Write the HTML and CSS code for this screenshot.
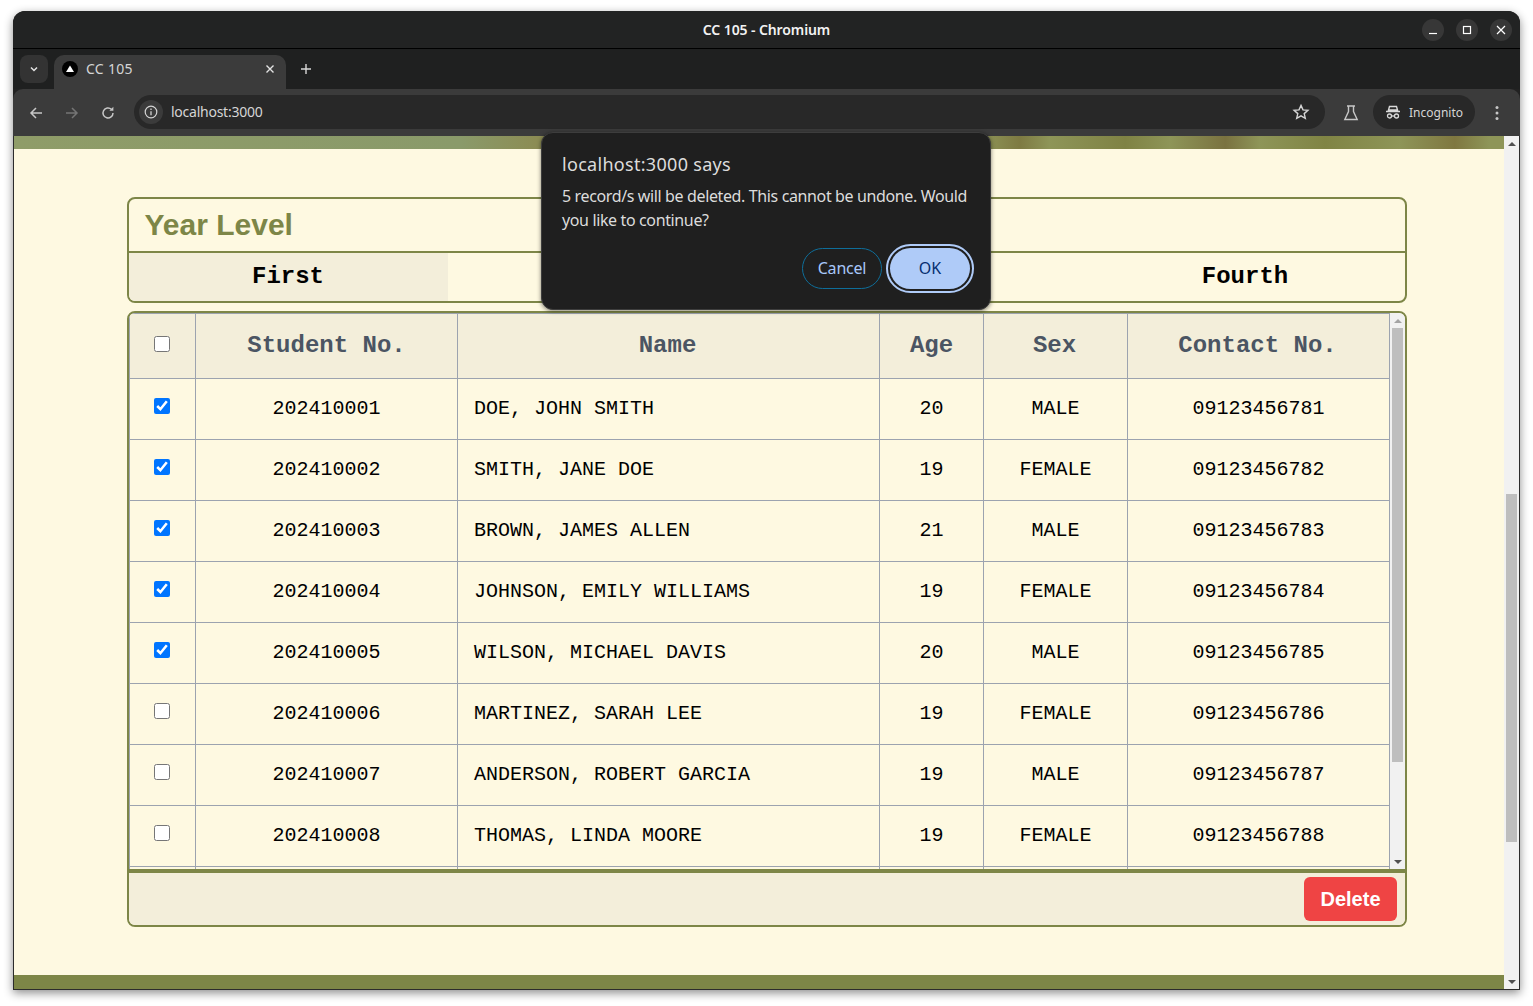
FILE: index.html
```html
<!DOCTYPE html>
<html lang="en">
<head>
    <meta charset="UTF-8">
    <title>CC 105</title>
    <link rel="stylesheet" href="styles.css">
</head>
<body>
<div class="window">
    <div class="titlebar">
        <span class="title-text">CC 105 - Chromium</span>
        <div class="win-btns">
            <span class="win-btn"><svg width="10" height="10" viewBox="0 0 10 10"><path d="M1 8.5h8" stroke="#fff" stroke-width="1.2"/></svg></span>
            <span class="win-btn"><svg width="10" height="10" viewBox="0 0 10 10"><rect x="1.5" y="1.5" width="7" height="7" fill="none" stroke="#fff" stroke-width="1.2"/></svg></span>
            <span class="win-btn"><svg width="10" height="10" viewBox="0 0 10 10"><path d="M1 1l8 8M9 1l-8 8" stroke="#fff" stroke-width="1.2"/></svg></span>
        </div>
    </div>

    <div class="tabstrip">
        <span class="tab-search"><svg width="10" height="10" viewBox="0 0 10 10"><path d="M2 3.5l3 3 3-3" fill="none" stroke="#e3e3e3" stroke-width="1.5"/></svg></span>
        <div class="tab">
            <svg class="favicon" width="16" height="16" viewBox="0 0 16 16"><circle cx="8" cy="8" r="8" fill="#000"/><path d="M8 4.5l4 6.5H4z" fill="#fff"/></svg>
            <span class="tab-title">CC 105</span>
            <svg class="tab-close" width="10" height="10" viewBox="0 0 10 10"><path d="M1.5 1.5l7 7M8.5 1.5l-7 7" stroke="#e3e3e3" stroke-width="1.4"/></svg>
        </div>
        <svg class="new-tab" width="12" height="12" viewBox="0 0 12 12"><path d="M6 1v10M1 6h10" stroke="#d8d8d8" stroke-width="1.4"/></svg>
    </div>

    <div class="toolbar">
        <svg class="nav-icon" width="16" height="16" viewBox="0 0 16 16"><path d="M14 8H3M8 3L3 8l5 5" fill="none" stroke="#c7c7c7" stroke-width="1.5"/></svg>
        <svg class="nav-icon" width="16" height="16" viewBox="0 0 16 16"><path d="M2 8h11M8 3l5 5-5 5" fill="none" stroke="#757575" stroke-width="1.5"/></svg>
        <svg class="nav-icon" width="16" height="16" viewBox="0 0 16 16"><path d="M13 8a5 5 0 1 1-1.6-3.7" fill="none" stroke="#c7c7c7" stroke-width="1.5"/><path d="M13.4 1.8v4h-4z" fill="#c7c7c7"/></svg>
        <div class="omnibox">
            <span class="site-info"><svg width="14" height="14" viewBox="0 0 14 14"><circle cx="7" cy="7" r="5.8" fill="none" stroke="#d5d5d5" stroke-width="1.2"/><path d="M7 6.2v4M7 3.6v1.4" stroke="#d5d5d5" stroke-width="1.3"/></svg></span>
            <span class="url">localhost:3000</span>
            <svg class="star" width="18" height="18" viewBox="0 0 18 18"><path d="M9 2.4l2 4.5 4.9.5-3.7 3.2 1.1 4.8L9 12.9l-4.3 2.5 1.1-4.8L2.1 7.4 7 6.9z" fill="none" stroke="#d5d5d5" stroke-width="1.4"/></svg>
        </div>
        <svg class="flask" width="16" height="18" viewBox="0 0 16 18"><path d="M4 2h8M5.5 2v5.5L1.800 15.500h12.400L10.500 7.500V2" fill="none" stroke="#c7c7c7" stroke-width="1.4"/></svg>
        <div class="incognito">
            <svg width="16" height="16" viewBox="0 0 16 16"><path d="M4.500 2.500h7l1 3.500h-9zM1 7.500h14" fill="none" stroke="#d8d8d8" stroke-width="1.4"/><circle cx="4.500" cy="12" r="2" fill="none" stroke="#d8d8d8" stroke-width="1.300"/><circle cx="11.500" cy="12" r="2" fill="none" stroke="#d8d8d8" stroke-width="1.300"/><path d="M6.500 12h3" stroke="#d8d8d8" stroke-width="1.300"/></svg>
            <span>Incognito</span>
        </div>
        <svg class="menu-dots" width="4" height="16" viewBox="0 0 4 16"><circle cx="2" cy="2.500" r="1.500" fill="#c7c7c7"/><circle cx="2" cy="8" r="1.500" fill="#c7c7c7"/><circle cx="2" cy="13.500" r="1.500" fill="#c7c7c7"/></svg>
    </div>

    <div class="viewport">
        <div class="page">
            <div class="top-bar"></div>
            <main class="content">
                <section class="year-card">
                    <h2 class="year-title">Year Level</h2>
                    <div class="year-tabs">
                        <div class="year-tab active">First</div>
                        <div class="year-tab"></div>
                        <div class="year-tab"></div>
                        <div class="year-tab">Fourth</div>
                    </div>
                </section>

                <section class="table-card">
                    <div class="table-row-wrap">
                        <div class="table-scroll">
                            <table class="students">
                                <colgroup>
                                    <col class="c-check"><col class="c-no"><col class="c-name"><col class="c-age"><col class="c-sex"><col class="c-contact">
                                </colgroup>
                                <thead>
                                    <tr>
                                        <th><input type="checkbox"></th>
                                        <th>Student No.</th>
                                        <th>Name</th>
                                        <th>Age</th>
                                        <th>Sex</th>
                                        <th>Contact No.</th>
                                    </tr>
                                </thead>
                                <tbody>
                                    <tr><td><input type="checkbox" checked></td><td>202410001</td><td class="name">DOE, JOHN SMITH</td><td>20</td><td>MALE</td><td>09123456781</td></tr>
                                    <tr><td><input type="checkbox" checked></td><td>202410002</td><td class="name">SMITH, JANE DOE</td><td>19</td><td>FEMALE</td><td>09123456782</td></tr>
                                    <tr><td><input type="checkbox" checked></td><td>202410003</td><td class="name">BROWN, JAMES ALLEN</td><td>21</td><td>MALE</td><td>09123456783</td></tr>
                                    <tr><td><input type="checkbox" checked></td><td>202410004</td><td class="name">JOHNSON, EMILY WILLIAMS</td><td>19</td><td>FEMALE</td><td>09123456784</td></tr>
                                    <tr><td><input type="checkbox" checked></td><td>202410005</td><td class="name">WILSON, MICHAEL DAVIS</td><td>20</td><td>MALE</td><td>09123456785</td></tr>
                                    <tr><td><input type="checkbox"></td><td>202410006</td><td class="name">MARTINEZ, SARAH LEE</td><td>19</td><td>FEMALE</td><td>09123456786</td></tr>
                                    <tr><td><input type="checkbox"></td><td>202410007</td><td class="name">ANDERSON, ROBERT GARCIA</td><td>19</td><td>MALE</td><td>09123456787</td></tr>
                                    <tr><td><input type="checkbox"></td><td>202410008</td><td class="name">THOMAS, LINDA MOORE</td><td>19</td><td>FEMALE</td><td>09123456788</td></tr>
                                    <tr><td></td><td></td><td></td><td></td><td></td><td></td></tr>
                                </tbody>
                            </table>
                        </div>
                        <div class="scrollbar small">
                            <span class="arrow up"></span>
                            <div class="track"><div class="thumb"></div></div>
                            <span class="arrow down"></span>
                        </div>
                    </div>
                    <div class="table-footer">
                        <button class="delete-btn">Delete</button>
                    </div>
                </section>
            </main>
            <div class="bottom-bar"></div>
        </div>
        <div class="scrollbar page-bar">
            <span class="arrow up"></span>
            <div class="track"><div class="thumb"></div></div>
            <span class="arrow down"></span>
        </div>
    </div>

    <div class="dialog">
        <div class="dialog-title">localhost:3000 says</div>
        <p class="dialog-msg">5 record/s will be deleted. This cannot be undone. Would you like to continue?</p>
        <div class="dialog-btns">
            <button class="btn-cancel">Cancel</button>
            <button class="btn-ok">OK</button>
        </div>
    </div>
</div>
</body>
</html>
```

FILE: styles.css
```css
*{
    box-sizing: border-box;
    margin: 0;
    padding: 0;
}
body{
    background: #fff;
    padding: 11px 13px 0 13px;
    height: 1006px;
    overflow: hidden;
    font-family: "Noto Sans", sans-serif;
}
.window{
    position: relative;
    width: 1507px;
    height: 979px;
    border-radius: 12px 12px 0 0;
    background: #222;
    box-shadow: 0 3px 10px rgba(0,0,0,.45);
    display: flex;
    flex-direction: column;
}

/* browser chrome */
.titlebar{
    height: 38px;
    background: #222323;
    border-bottom: 1px solid #000;
    border-radius: 12px 12px 0 0;
    display: flex;
    align-items: center;
    justify-content: center;
    position: relative;
}
.title-text{
    color: #f2f2f2;
    font-size: 14px;
    font-weight: 600;
    letter-spacing: -.1px;
}
.win-btns{
    position: absolute;
    right: 8px;
    top: 8px;
    display: flex;
    gap: 12px;
}
.win-btn{
    width: 22px;
    height: 22px;
    border-radius: 50%;
    background: #373737;
    display: flex;
    align-items: center;
    justify-content: center;
}
.tabstrip{
    height: 40px;
    background: #1f2020;
    display: flex;
    align-items: flex-start;
    padding: 6px 0 0 7px;
}
.tab-search{
    width: 28px;
    height: 28px;
    border-radius: 8px;
    background: #333;
    display: flex;
    align-items: center;
    justify-content: center;
}
.tab{
    width: 232px;
    height: 34px;
    margin-left: 6px;
    background: #3b3b3b;
    border-radius: 10px 10px 0 0;
    display: flex;
    align-items: center;
    padding: 0 11px 6px 8px;
}
.tab-title{
    color: #d5d5d5;
    font-size: 14px;
    line-height: 18px;
    margin-left: 8px;
    flex: 1;
    letter-spacing: .3px;
}
.new-tab{
    margin: 8px 0 0 14px;
}
.toolbar{
    height: 47px;
    background: #3b3b3b;
    border-radius: 10px 10px 0 0;
    display: flex;
    align-items: center;
    padding: 0 21px 0 15px;
}
.nav-icon{
    margin-right: 20px;
}
.nav-icon:nth-child(3){
    margin-right: 18px;
}
.omnibox{
    flex: 1;
    height: 34px;
    background: #282828;
    border-radius: 17px;
    display: flex;
    align-items: center;
    padding: 0 15px 0 5px;
    color: #d5d5d5;
    margin-top: -1px;
}
.site-info{
    width: 24px;
    height: 24px;
    border-radius: 50%;
    background: #3b3b3b;
    display: flex;
    align-items: center;
    justify-content: center;
}
.url{
    font-size: 14px;
    line-height: 18px;
    margin-left: 8px;
    flex: 1;
    letter-spacing: -.25px;
}
.flask{
    margin-left: 18px;
}
.incognito{
    width: 102px;
    height: 34px;
    margin-left: 14px;
    background: #282828;
    border-radius: 17px;
    display: flex;
    align-items: center;
    gap: 8px;
    padding-left: 12px;
    color: #d5d5d5;
    font-size: 12px;
    margin-top: -1px;
}
.menu-dots{
    margin-left: 20px;
}

/* page area */
.viewport{
    flex: 1;
    display: flex;
    min-height: 0;
    border: 1px solid #2c2c2c;
    border-top: 0;
    background: #fef9e1;
}
.page{
    flex: 1;
    display: flex;
    flex-direction: column;
    min-width: 0;
    background: #fef9e1;
}
.top-bar{
    height: 13px;
    background: linear-gradient(90deg, #8f9c68 0%, #8a9a6a 30%, #8c8c54 35%, #8e9558 65%, #7e7a42 67.5%, #8e9558 69.5%, #7f8244 74.6%, #8e9558 77.6%, #7a7240 81.3%, #8e9558 83.6%, #808444 88%, #8e9558 93%, #7f7740 96.7%, #8e9558 99%);
}
.bottom-bar{
    height: 14px;
    background: #7d8647;
}
.content{
    flex: 1;
    padding: 48px 97px 0 113px;
    display: flex;
    flex-direction: column;
    gap: 8px;
}
.year-card{
    border: 2px solid #7d8647;
    border-radius: 8px;
    overflow: hidden;
    height: 106px;
}
.year-title{
    height: 54px;
    border-bottom: 2px solid #7d8647;
    color: #7d8647;
    font: bold 30px/52px "Liberation Sans", sans-serif;
    padding-left: 15.5px;
}
.year-tabs{
    display: grid;
    grid-template-columns: repeat(4, 1fr);
    height: 48px;
}
.year-tab{
    font: bold 24px/48px "Liberation Mono", monospace;
    color: #000;
    text-align: center;
    padding-right: 1px;
}
.year-tab.active{
    background: #f3eeda;
}
.table-card{
    border: 2px solid #7d8647;
    border-radius: 8px;
    overflow: hidden;
    height: 616px;
    display: flex;
    flex-direction: column;
}
.table-row-wrap{
    height: 560px;
    display: flex;
    border-bottom: 4px solid #7d8647;
}
.table-scroll{
    flex: 1;
    overflow: hidden;
    min-width: 0;
}
.students{
    width: 1260px;
    border-collapse: collapse;
    table-layout: fixed;
    font-family: "Liberation Mono", monospace;
}
.c-check{ width: 66px; }
.c-no{ width: 262px; }
.c-name{ width: 422px; }
.c-age{ width: 104px; }
.c-sex{ width: 144px; }
.c-contact{ width: 262px; }
.students th, .students td{
    border: 1px solid #9ca3af;
    text-align: center;
    padding-bottom: 2px;
}
.students th{
    height: 65px;
    background: #f3eeda;
    color: #4b5563;
    font-size: 24px;
    font-weight: bold;
}
.students th:nth-child(3), .students th:nth-child(5), .students th:nth-child(6){
    padding-right: 2px;
}
.students td{
    height: 61px;
    font-size: 20px;
    color: #000;
}
.students td.name{
    text-align: left;
    padding-left: 16px;
}
.students input{
    width: 16px;
    height: 16px;
    display: inline-block;
    vertical-align: middle;
    position: relative;
    left: -1px;
    top: -2px;
}
.students th input{
    top: -1px;
}
.table-footer{
    flex: 1;
    background: #f3eeda;
    display: flex;
    justify-content: flex-end;
    align-items: center;
    padding-right: 8px;
}
.delete-btn{
    width: 93px;
    height: 44px;
    background: #ef4444;
    color: #fff;
    border: 0;
    border-radius: 6px;
    font: bold 20px "Liberation Sans", sans-serif;
}

/* fake scrollbars */
.scrollbar{
    width: 15px;
    background: #f1f1f1;
    display: flex;
    flex-direction: column;
    align-items: center;
}
.scrollbar .track{
    flex: 1;
    width: 100%;
    display: flex;
}
.scrollbar .thumb{
    background: #bebebe;
    width: 11px;
    margin: 0 auto;
}
.arrow{
    width: 15px;
    height: 15px;
    display: flex;
    align-items: center;
    justify-content: center;
    flex: none;
}
.arrow::before{
    content: "";
    border-left: 4px solid transparent;
    border-right: 4px solid transparent;
}
.arrow.up::before{
    border-bottom: 4px solid #505050;
}
.arrow.down::before{
    border-top: 4px solid #505050;
}
.small .arrow.up::before{
    border-bottom-color: #a3a3a3;
}
.small .track .thumb{
    height: 434px;
}
.page-bar .track{
    padding-top: 343px;
}
.page-bar .thumb{
    height: 348px;
}

/* alert */
.dialog{
    position: absolute;
    left: 528px;
    top: 121px;
    width: 450px;
    height: 178px;
    background: #1f1f1f;
    border-radius: 12px;
    border: 1px solid #3d3d3d;
    box-shadow: 0 1px 4px rgba(0,0,0,.5);
    color: #dcdcdc;
    padding: 19px 20px 0;
}
.dialog-title{
    font-size: 18px;
    line-height: 24px;
    letter-spacing: .3px;
}
.dialog-msg{
    font-size: 16px;
    line-height: 24px;
    margin-top: 8px;
    letter-spacing: -.37px;
}
.dialog-btns{
    display: flex;
    justify-content: flex-end;
    align-items: center;
    gap: 8px;
    margin-top: 16px;
}
.btn-cancel{
    width: 80px;
    height: 41px;
    padding-bottom: 2px;
    border-radius: 21px;
    background: transparent;
    border: 1px solid #0e6e9a;
    color: #a8c7fa;
    font: 16px "Noto Sans", sans-serif;
    letter-spacing: -.2px;
}
.btn-ok{
    width: 80px;
    height: 41px;
    padding-bottom: 2px;
    border-radius: 21px;
    border: 0;
    background: #afcbf8;
    color: #062e6f;
    font: 16px "Noto Sans", sans-serif;
    outline: 2px solid #afcbf8;
    outline-offset: 2px;
    box-shadow: 0 0 0 2px #1f1f1f;
}
```
